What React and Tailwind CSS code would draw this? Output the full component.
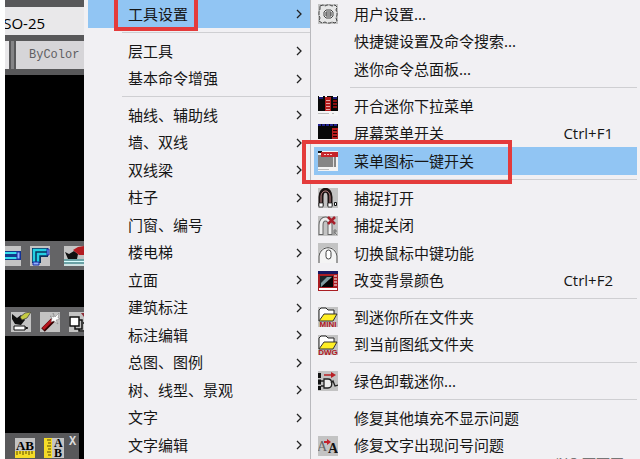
import React from 'react';

const Icon = ({ children, plain }) => (
  <svg viewBox="0 0 20 20" className="w-5 h-5 shrink-0" aria-hidden="true">
    {!plain && <rect width="20" height="20" fill="#c3c3c3" />}
    {children}
  </svg>
);

const Gear = () => (
  <Icon>
    <g fill="#e6e6e6" stroke="#444" strokeWidth="1">
      <path d="M2 2l3-1 2 1 2-1h3l2 1 3-1 2 2-1 3 1 2v3l-1 3 1 3-2 2-3-1-2 1H9l-2-1-3 1-3-2 1-3-1-3V8l1-3z" strokeDasharray="4 1" />
      <path d="M6 8l2-2h5l2 2v4l-2 2H8l-2-2z" />
      <path d="M8 8h5v4H8zM8 10h5" fill="none" />
    </g>
  </Icon>
);

const MenuDown = () => (
  <Icon plain>
    <g shapeRendering="crispEdges">
      <rect width="20" height="20" fill="#f5f5f5" />
      <rect width="20" height="15" fill="#080808" />
      <path d="M1 0h4v1H1zM7 0h2v1H7zM15 0h4v1h-4z" fill="#fff" />
      <path d="M1 2h4M15 2h4" stroke="#1c1c78" strokeWidth="2" />
      <rect x="7" y="1" width="6" height="14" fill="#b51d1d" />
      <path d="M8 4h4M8 7h4M8 10h4M8 13h4" stroke="#e9a5a5" />
      <path d="M15 5h4M15 8h4M15 11h4" stroke="#8b1010" strokeWidth="2" />
      <path d="M0 17h11M14 17h2" stroke="#bbb" />
    </g>
  </Icon>
);

const ScreenMenu = () => (
  <Icon plain>
    <g shapeRendering="crispEdges">
      <rect width="20" height="20" fill="#f5f5f5" />
      <rect width="20" height="15" fill="#080808" />
      <path d="M0 1h20" stroke="#23238e" strokeWidth="2" strokeDasharray="3 1" />
      <rect x="14" y="4" width="6" height="11" fill="#b51d1d" />
      <path d="M15 6h4M15 9h4M15 12h4" stroke="#200" />
      <path d="M0 17h11" stroke="#bbb" />
    </g>
  </Icon>
);

const ToolbarToggle = () => (
  <Icon plain>
    <g shapeRendering="crispEdges">
      <rect width="20" height="20" fill="#f3f3f3" />
      <path d="M0 1h4" stroke="#111" strokeWidth="2" />
      <rect y="4" width="18" height="12" fill="#858585" />
      <rect x="15" y="6" width="1" height="10" fill="#ddd" />
      <rect x="3" y="1" width="17" height="5" fill="#c6242b" />
      <path d="M6 3.500h9" stroke="#f7c4c4" strokeWidth="1" strokeDasharray="2 1" />
      <path d="M0 18h11" stroke="#bbb" />
    </g>
  </Icon>
);

const SnapOn = () => (
  <Icon>
    <path d="M3 18V9c0-9 9-9 9 0v9" fill="none" stroke="#1a1212" strokeWidth="5" />
    <path d="M3 15V9c0-8 9-8 9 0v6" fill="none" stroke="#c98f8f" strokeWidth="1" />
    <path d="M1 15h4v4H1zM10 15h4v4h-4z" fill="#fff" stroke="#111" strokeWidth=".7" />
    <path d="M16.500 14.500h2v3h-2z" fill="#fff" stroke="#111" />
  </Icon>
);

const SnapOff = () => (
  <Icon>
    <path d="M3 19V9c0-8 9-8 9 0v10" fill="none" stroke="#666" strokeWidth="5" />
    <path d="M3 18V9c0-8 9-8 9 0v9" fill="none" stroke="#eee" strokeWidth="3" />
    <path d="M10 1l7 7M17 1l-7 7" stroke="#a71f2a" strokeWidth="2.500" />
    <path d="M16 19v-5h2v2h-2l3 3" fill="none" stroke="#777" />
  </Icon>
);

const MouseKey = () => (
  <Icon>
    <path d="M0 20V13C3 1 17 1 20 13v7z" fill="#f4f4f4" />
    <path d="M1 20V13C3 2 17 2 19 13v7" fill="none" stroke="#444" />
    <rect x="8" y="7" width="5" height="9" rx="2.500" fill="#fff" stroke="#444" />
  </Icon>
);

const BackColor = () => (
  <Icon plain>
    <rect width="20" height="20" fill="#a91d22" />
    <path d="M0 1.500h20" stroke="#181860" strokeWidth="3" />
    <path d="M2 5h13v11H2z" fill="#1b2528" />
    <path d="M3 16L15 5v11z" fill="#050505" />
    <path d="M3 12l6-6h5L3 16z" fill="#7f9ca0" />
    <path d="M16 5h3M16 8h3M16 11h3M16 14h3" stroke="#fff" />
    <path d="M1 18h18" stroke="#fff" strokeWidth="2" />
  </Icon>
);

const Folder = ({ label }) => (
  <Icon>
    <path d="M1 14V3l2-2h5l2 2h6v4" fill="#fff" stroke="#222" />
    <path d="M1 14l5-7h13l-4 7z" fill="#ffef24" stroke="#333" />
    <text x="10" y="20" textAnchor="middle" className="font-['Liberation_Sans'] text-[8px] font-bold" fill="#b2151c">
      {label}
    </text>
  </Icon>
);

const Unplug = () => (
  <Icon>
    <path d="M6 4h9" stroke="#b91f25" strokeWidth="1.500" />
    <path d="M13 1l5 3-5 3z" fill="#b91f25" />
    <path d="M1.500 2v17" stroke="#111" strokeWidth="3" strokeDasharray="5 1.500" />
    <path d="M6 8h4c5 0 5 9 0 9H6z" fill="#eee" stroke="#222" strokeWidth="1.300" />
    <path d="M3 10h3M3 15h3M13 12l2-2 2 5 3-1" fill="none" stroke="#222" strokeWidth="1.300" />
  </Icon>
);

const FixText = () => (
  <Icon>
    <g className="font-['Liberation_Serif'] text-[14px]">
      <text x="-1" y="15" fill="#666">A</text>
      <text x="10" y="17" fill="#111" fontWeight="bold">A</text>
    </g>
    <path d="M6 6h4" stroke="#c3212b" strokeWidth="2" />
    <path d="M9 3l4 3-4 3z" fill="#c3212b" />
  </Icon>
);

// drawing toolbar icons
const Wall = () => (
  <Icon>
    <path d="M0 5h20v9H0z" fill="#123a8c" />
    <path d="M0 7h17M0 12h17" stroke="#35dcec" strokeWidth="2" />
    <path d="M16 6h3v7h-3z" fill="#8fb2ff" stroke="#1428a0" />
  </Icon>
);

const WallCorner = () => (
  <Icon>
    <path d="M2 17V2h16v9h-7v6z" fill="#0b315c" />
    <path d="M4 16V4h13M8 16V8h9" fill="none" stroke="#23cfe2" strokeWidth="2.500" />
    <path d="M3 16h6v3H3zM17 3h2v6h-2z" fill="#8fb2ff" stroke="#1428a0" />
  </Icon>
);

const Scenery = () => (
  <Icon>
    <path d="M1 6l4 2 5-3 4 3-1 5H4z" fill="#111" />
    <path d="M9 4l5-3 6-1v9h-5z" fill="#b31b20" />
    <path d="M0 14h20M0 17h20" stroke="#128087" />
    <path d="M0 15.500h20M0 19h20" stroke="#d9ffff" />
  </Icon>
);

const Brush = () => (
  <Icon>
    <path d="M1 2l5 4 4-3 4 5-4 5-6-1-3-5z" fill="#101010" />
    <path d="M9 5l5-4 6-1-4 6-5 2z" fill="#c5cb43" stroke="#333" strokeWidth=".7" />
    <path d="M3 14h11v4H3zM14 15l3 1-3 1" fill="#fff" stroke="#111" />
  </Icon>
);

const Wand = () => (
  <Icon>
    <path d="M3 18L13 8" stroke="#300" strokeWidth="5" />
    <path d="M3 17L12 8" stroke="#b5161f" strokeWidth="3" />
    <path d="M13 1l2 4 4-4-1 5 3 1-5 1 2 4-4-3-3 1 1-4-2-2 4 1z" fill="#fff" stroke="#777" strokeWidth=".5" />
  </Icon>
);

const Copies = () => (
  <Icon>
    <path d="M1 5h9v9H1z" fill="#fff" stroke="#111" strokeWidth="1.500" />
    <path d="M6 14v3h7V8h-3M10 17v2h7V11h-3" fill="none" stroke="#111" strokeWidth="1.500" />
    <path d="M12 1h6l-3 4z" fill="#8d2b35" />
  </Icon>
);

const RulerH = () => (
  <Icon>
    <text x="10" y="12" textAnchor="middle" className="font-['Liberation_Serif'] text-[13px] font-bold">AB</text>
    <rect y="13" width="20" height="7" fill="#f5dc28" />
    <path d="M2 13v4M5 13v3M8 13v4M11 13v3M14 13v4M17 13v3" stroke="#5a4a00" />
  </Icon>
);

const RulerV = () => (
  <Icon>
    <rect width="8" height="20" fill="#f5dc28" />
    <path d="M7 2H3M7 5H4M7 8H3M7 11H4M7 14H3M7 17H4" stroke="#5a4a00" />
    <g className="font-['Liberation_Serif'] text-[12px] font-bold">
      <text x="10" y="9">A</text>
      <text x="10" y="19">B</text>
    </g>
  </Icon>
);

const Chevron = () => (
  <svg viewBox="0 0 6 10" className="w-1.5 h-2.5 mr-2 shrink-0" fill="none" stroke="#222" strokeWidth="1.300" aria-hidden="true">
    <path d="M1 1l4 4-4 4" />
  </svg>
);

const categories = [
  [{ name: '工具设置', active: true }],
  [{ name: '层工具' }, { name: '基本命令增强' }],
  [
    { name: '轴线、辅助线' },
    { name: '墙、双线' },
    { name: '双线梁' },
    { name: '柱子' },
    { name: '门窗、编号' },
    { name: '楼电梯' },
    { name: '立面' },
    { name: '建筑标注' },
    { name: '标注编辑' },
    { name: '总图、图例' },
    { name: '树、线型、景观' },
    { name: '文字' },
    { name: '文字编辑' },
  ],
];

const commands = [
  [{ name: '用户设置...', icon: <Gear /> }, { name: '快捷键设置及命令搜索...' }, { name: '迷你命令总面板...' }],
  [
    { name: '开合迷你下拉菜单', icon: <MenuDown /> },
    { name: '屏幕菜单开关', icon: <ScreenMenu />, keys: 'Ctrl+F1' },
    { name: '菜单图标一键开关', icon: <ToolbarToggle />, active: true },
  ],
  [
    { name: '捕捉打开', icon: <SnapOn /> },
    { name: '捕捉关闭', icon: <SnapOff /> },
    { name: '切换鼠标中键功能', icon: <MouseKey /> },
    { name: '改变背景颜色', icon: <BackColor />, keys: 'Ctrl+F2' },
  ],
  [
    { name: '到迷你所在文件夹', icon: <Folder label="MINI" /> },
    { name: '到当前图纸文件夹', icon: <Folder label="DWG" /> },
  ],
  [{ name: '绿色卸载迷你...', icon: <Unplug /> }],
  [{ name: '修复其他填充不显示问题' }, { name: '修复文字出现问号问题', icon: <FixText /> }],
];

const CategoryMenu = () => (
  <nav className="w-[227px] shrink-0 pl-1 border-r border-[#b9b9bd]">
    {categories.map((group, i) => (
      <React.Fragment key={i}>
        {i > 0 && <hr className="my-1 ml-[34px] border-[#cfcfd2]" />}
        <ul>
          {group.map((item) => (
            <li key={item.name} className="relative odd:h-7 even:h-[27px]">
              <button className={`w-full h-full flex items-center justify-between pl-10 ${item.active ? 'bg-[#91c5f3]' : ''}`}>
                {item.name}
                <Chevron />
              </button>
              {item.active && (
                <span className="absolute left-[26px] -top-1 w-[84px] h-[35px] border-4 border-[#e43b3b] pointer-events-none" />
              )}
            </li>
          ))}
        </ul>
      </React.Fragment>
    ))}
  </nav>
);

const CommandMenu = () => (
  <nav className="flex-1 min-w-0 px-[3px]">
    {commands.map((group, i) => (
      <React.Fragment key={i}>
        {i > 0 && <hr className="my-1 ml-9 border-[#cfcfd2]" />}
        <ul>
          {group.map((item) => (
            <li key={item.name} className="relative odd:h-7 even:h-[27px]">
              <button className={`w-full h-full flex items-center gap-4 pl-1 pr-6 ${item.active ? 'bg-[#91c5f3]' : ''}`}>
                {item.icon || <span className="w-5 shrink-0" />}
                <span className="whitespace-nowrap">{item.name}</span>
                {item.keys && <kbd className="ml-auto font-['Open_Sans',sans-serif]">{item.keys}</kbd>}
              </button>
              {item.active && (
                <span className="absolute z-10 -left-3 -top-[7px] w-[210px] h-11 border-4 border-[#e43b3b] pointer-events-none" />
              )}
            </li>
          ))}
        </ul>
      </React.Fragment>
    ))}
  </nav>
);

const DrawingArea = () => (
  <section className="w-[79px] shrink-0 h-full overflow-hidden flex flex-col bg-black">
    <div className="bg-[#58585a] pt-[7px] pb-1.5">
      <div className="h-7 pt-1 flex items-center bg-[#e9e8ea] text-[15px] font-['Open_Sans',sans-serif]">
        <span className="-ml-1.5">ISO-25</span>
      </div>
      <div className="h-7 mt-1.5 flex bg-[#d6d5d8]">
        <span className="w-1 bg-[#e9e8ea]" />
        <span className="w-[7px] border-x-2 border-[#58585a] bg-[#858587]" />
        <span className="pl-[13px] text-[12px] leading-7 text-[#5f5f63] font-['Liberation_Mono',monospace]">ByColor</span>
      </div>
    </div>
    <div className="mt-[166px] h-[29px] shrink-0 flex items-center bg-[#646466]">
      <span className="-ml-1"><Wall /></span>
      <span className="ml-[9px]"><WallCorner /></span>
      <span className="ml-2 w-0.5 h-6 bg-[#3c3c3e]" />
      <span className="ml-1.5"><Scenery /></span>
    </div>
    <div className="mt-[37px] h-[29px] shrink-0 flex items-center gap-[9px] pl-1.5 bg-[#646466]">
      <Brush />
      <Wand />
      <Copies />
    </div>
    <div className="mt-[97px] h-[30px] w-[74px] shrink-0 flex items-center gap-[9px] pl-2.5 bg-[#58585a]">
      <RulerH />
      <RulerV />
      <button className="-ml-1 -mt-3 text-[12px] font-bold text-[#ddd] font-['Liberation_Mono',monospace]" aria-label="关闭">X</button>
    </div>
  </section>
);

const App = () => (
  <main className="relative h-screen overflow-hidden flex pl-[5px] bg-white">
    <DrawingArea />
    <div className="flex-1 flex bg-[#f1f0f3] text-[15px] text-[#161616] font-['Noto_Sans','Noto_Sans_CJK_SC',sans-serif]">
      <CategoryMenu />
      <CommandMenu />
    </div>
    <p className="absolute right-4 -bottom-3 text-[14px] leading-4 text-[#777] font-['Noto_Sans_CJK_SC',sans-serif]">/NO 可可网</p>
  </main>
);

export default App;
